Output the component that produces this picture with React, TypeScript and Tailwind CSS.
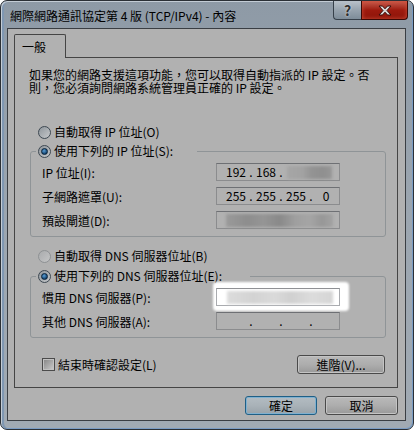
import clsx from 'clsx'

function Radio({ checked, disabled }: { checked?: boolean; disabled?: boolean }) {
  return (
    <span
      className={clsx(
        'flex h-[13px] w-[13px] shrink-0 items-center justify-center rounded-full border',
        disabled
          ? 'border-[#8e9194] bg-linear-to-br from-[#a9abad] to-[#c4c5c6]'
          : 'border-[#3d4852] bg-linear-to-br from-[#8f969c] to-[#c6c8ca]'
      )}
    >
      {checked && (
        <span className="h-[7px] w-[7px] rounded-full border border-[#08223a] bg-[radial-gradient(circle_at_40%_35%,#5b9ed4,#0e3d69_75%)]" />
      )}
    </span>
  )
}

function RadioRow({ label, checked, disabled, className }: { label: string; checked?: boolean; disabled?: boolean; className?: string }) {
  return (
    <div className={clsx('flex h-[14px] items-center gap-[3px]', className)}>
      <Radio checked={checked} disabled={disabled} />
      <span className="whitespace-nowrap">{label}</span>
    </div>
  )
}

function Field({ v }: { v: string }) {
  return <span className="w-[24px] text-center">{v}</span>
}

function Dot() {
  return <span className="w-[6px] text-center">.</span>
}

function Fields({ parts }: { parts: string[] }) {
  return (
    <>
      <Field v={parts[0]} />
      <Dot />
      <Field v={parts[1]} />
      <Dot />
      <Field v={parts[2]} />
      <Dot />
      <Field v={parts[3]} />
    </>
  )
}

function IpBox({ children, white }: { children: React.ReactNode; white?: boolean }) {
  return (
    <div
      className={clsx(
        'relative flex h-[18px] w-[124px] items-center border pl-[7px]',
        white ? 'border-[#a9abaf] border-t-[#8d8f93] bg-white' : 'border-[#8b8c8e] border-t-[#6e7074]'
      )}
    >
      {children}
    </div>
  )
}

function Label({ text }: { text: string }) {
  return <div className="flex h-[18px] items-center pt-[2px]">{text}</div>
}

function Btn({ label, w, primary }: { label: string; w: string; primary?: boolean }) {
  return (
    <div
      className={clsx(
        'flex h-[19px] items-center justify-center rounded-[3px] border',
        w,
        primary
          ? 'border-[#1f5f86] bg-linear-to-b from-[#b3bcc2] via-[#a9b2b8] to-[#98a2a9] shadow-[inset_0_0_0_1px_#7fb0cf]'
          : 'border-[#4a4a4a] bg-linear-to-b from-[#b9b9b9] via-[#adadad] to-[#999999] shadow-[inset_0_0_0_1px_#c4c4c4]'
      )}
    >
      {label}
    </div>
  )
}

export default function App() {
  return (
    <div className="h-[430px] w-[414px] font-['Noto_Sans_CJK_TC','Noto_Sans',sans-serif] text-[12px] leading-[12px] text-black">
      <div className="flex h-full flex-col rounded-[7px] border border-[#2b3036] bg-linear-to-b from-[#8e9aa6] via-[#9ca6b0] to-[#a1aab3] pb-[8px] pl-[6px] pr-[7px] shadow-[inset_1px_1px_0_#c3ccd5,inset_-1px_-1px_0_#7a9cc4,inset_3px_0_0_#7f97b2]">
        <div className="flex h-[27px] items-start">
          <div className="pl-[3px] pt-[9px] whitespace-nowrap">網際網路通訊協定第 4 版 (TCP/IPv4) - 內容</div>
          <div className="-mr-[2px] ml-auto flex">
            <div className="flex h-[19px] w-[28px] items-center justify-center rounded-bl-[4px] border border-t-0 border-r-0 border-[#37404a] bg-linear-to-b from-[#b9c2ca] via-[#97a3ae] to-[#7e8c99] text-[14px] font-bold text-[#2e2e2e] [text-shadow:0_0_2px_#e8e8e8]">
              ?
            </div>
            <div className="flex h-[19px] w-[47px] items-center justify-center rounded-br-[4px] border border-t-0 border-[#3b0905] bg-linear-to-b from-[#c65a4c] via-[#9e1a0e] to-[#8c1409] shadow-[inset_0_0_4px_#d4503a]">
              <svg width="14" height="11" viewBox="0 0 14 11">
                <path d="M1 1h3.5L7 3.8 9.5 1H13L9 5.5 13 10H9.5L7 7.2 4.5 10H1L5 5.5Z" fill="#d7d7d7" stroke="#3a0d08" strokeWidth="1" strokeLinejoin="round" />
              </svg>
            </div>
          </div>
        </div>

        <div className="flex flex-1 flex-col border border-[#3a3e43] bg-[#b1b1b1]">
          <div className="relative z-10 -mb-px ml-[6px] mt-[5px] flex h-[24px] w-[52px] items-center rounded-t-[2px] border border-b-0 border-[#454545] bg-[#b1b1b1] pl-[7px]">
            一般
          </div>
          <div className="ml-[6px] flex w-[384px] flex-col border border-[#454545] pb-[13px]">
            <p className="ml-[14px] mt-[10px] whitespace-nowrap leading-[13px]">
              如果您的網路支援這項功能，您可以取得自動指派的 IP 設定。否
              <br />
              則，您必須詢問網路系統管理員正確的 IP 設定。
            </p>

            <RadioRow className="ml-[23px] mt-[31px]" label="自動取得 IP 位址(O)" />

            <fieldset className="ml-[15px] mt-[5px] w-[356px] rounded-[3px] border border-[#8f9497] pb-[7px]">
              <legend className="ml-[5px] w-[161px] pl-[2px]">
                <RadioRow checked label="使用下列的 IP 位址(S):" />
              </legend>
              <div className="mt-[5px] grid grid-cols-[174px_124px] gap-y-[6px] pl-[11px]">
                <Label text="IP 位址(I):" />
                <IpBox>
                  <Field v="192" />
                  <Dot />
                  <Field v="168" />
                  <Dot />
                  <span className="ml-[3px] h-[13px] w-[45px] bg-[linear-gradient(90deg,#a6a6a6,#a2a2a2_35%,#939393_55%,#8f8f8f_80%,#979797)] blur-[1.5px]" />
                </IpBox>
                <Label text="子網路遮罩(U):" />
                <IpBox>
                  <Fields parts={['255', '255', '255', '0']} />
                </IpBox>
                <Label text="預設閘道(D):" />
                <IpBox>
                  <span className="ml-[2px] h-[13px] w-[107px] bg-[linear-gradient(90deg,#9a9a9a,#8d8d8d_20%,#959595_35%,#898989_50%,#9f9f9f_65%,#a5a5a5_78%,#979797_90%,#a2a2a2)] blur-[1.5px]" />
                </IpBox>
              </div>
            </fieldset>

            <RadioRow className="ml-[23px] mt-[12px]" disabled label="自動取得 DNS 伺服器位址(B)" />

            <fieldset className="ml-[15px] mt-[6px] w-[356px] rounded-[3px] border border-[#8f9497] pb-[7px]">
              <legend className="ml-[5px] w-[214px] pl-[2px]">
                <RadioRow checked label="使用下列的 DNS 伺服器位址(E):" />
              </legend>
              <div className="mt-[5px] grid grid-cols-[174px_124px] gap-y-[6px] pl-[11px]">
                <Label text="慣用 DNS 伺服器(P):" />
                <div className="relative">
                  <div className="absolute -bottom-[5px] -left-[3px] -right-[9px] -top-[6px] rounded-[4px] bg-white blur-[1px]" />
                  <IpBox white>
                    <span className="ml-[3px] h-[13px] w-[106px] bg-[linear-gradient(90deg,#dcdcdc,#d3d3d3_25%,#dadada_45%,#d0d0d0_60%,#dcdcdc_80%,#d5d5d5)] blur-[1.5px]" />
                  </IpBox>
                </div>
                <Label text="其他 DNS 伺服器(A):" />
                <IpBox>
                  <Fields parts={['', '', '', '']} />
                </IpBox>
              </div>
            </fieldset>

            <div className="ml-[27px] mr-[12px] mt-[17px] flex h-[19px] items-center">
              <span className="flex h-[13px] w-[13px] items-center justify-center border border-[#4b4b4b] bg-[#c2c2c2]">
                <span className="h-[9px] w-[9px] bg-linear-to-br from-[#8a8a8a] to-[#c6c6c6]" />
              </span>
              <span className="ml-[3px]">結束時確認設定(L)</span>
              <div className="ml-auto">
                <Btn label="進階(V)..." w="w-[88px]" />
              </div>
            </div>
          </div>

          <div className="mr-[7px] mt-[8px] flex justify-end gap-[8px]">
            <Btn label="確定" w="w-[72px]" primary />
            <Btn label="取消" w="w-[73px]" />
          </div>
        </div>
      </div>
    </div>
  )
}
